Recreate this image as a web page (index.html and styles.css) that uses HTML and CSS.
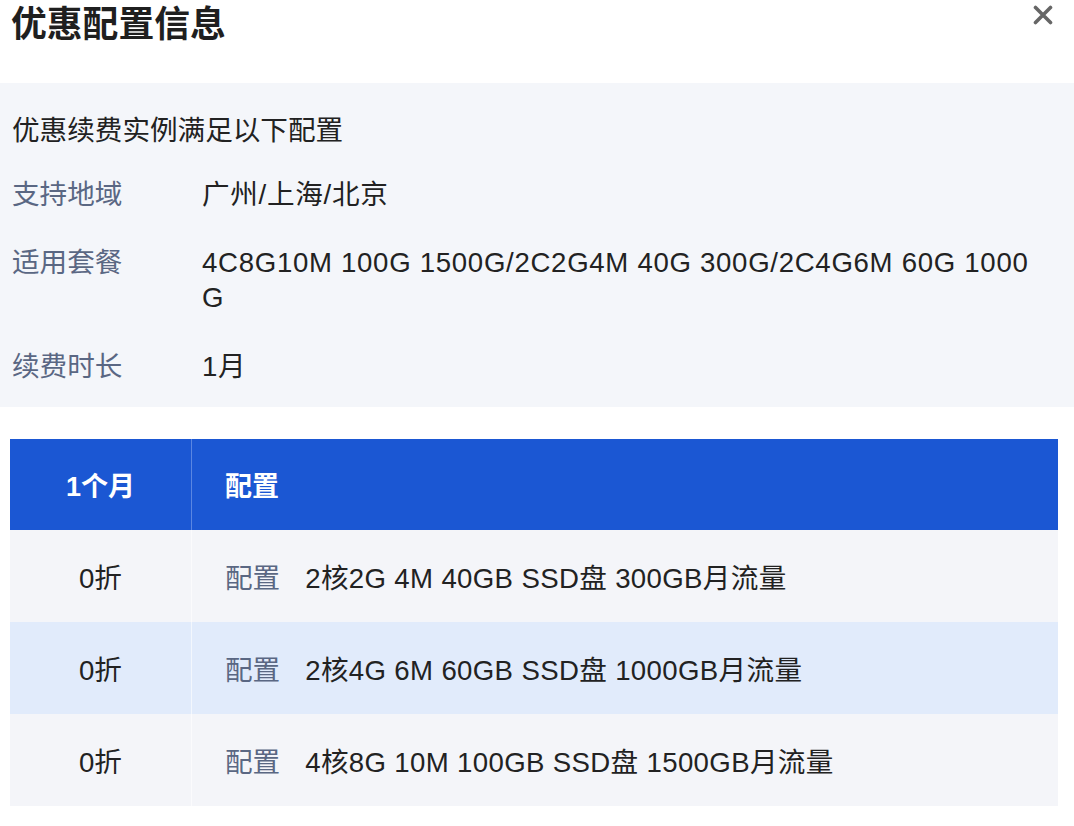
FILE: index.html
```html
<!DOCTYPE html>
<html lang="zh-CN">
<head>
<meta charset="utf-8">
<title>优惠配置信息</title>
<link rel="stylesheet" href="styles.css">
</head>
<body>
<div class="dialog">
  <header class="dialog-head">
    <h1 class="dialog-title">优惠配置信息</h1>
    <button class="close-btn" aria-label="关闭">
      <svg width="20" height="20" viewBox="0 0 20 20"><path d="M2.5 2.5 L17.5 17.5 M17.5 2.5 L2.5 17.5" stroke="#666" stroke-width="3.6" stroke-linecap="round" fill="none"/></svg>
    </button>
  </header>

  <section class="info">
    <div class="info-title">优惠续费实例满足以下配置</div>
    <div class="info-row">
      <div class="info-label">支持地域</div>
      <div class="info-value">广州/上海/北京</div>
    </div>
    <div class="info-row">
      <div class="info-label">适用套餐</div>
      <div class="info-value">4C8G10M 100G 1500G/2C2G4M 40G 300G/2C4G6M 60G 1000G</div>
    </div>
    <div class="info-row">
      <div class="info-label">续费时长</div>
      <div class="info-value">1月</div>
    </div>
  </section>

  <div class="table">
    <div class="tr th">
      <div class="cell c1">1个月</div>
      <div class="cell c2">配置</div>
    </div>
    <div class="tr odd">
      <div class="cell c1">0折</div>
      <div class="cell c2"><span class="cfg-label">配置</span><span class="cfg-value">2核2G 4M 40GB SSD盘 300GB月流量</span></div>
    </div>
    <div class="tr even">
      <div class="cell c1">0折</div>
      <div class="cell c2"><span class="cfg-label">配置</span><span class="cfg-value">2核4G 6M 60GB SSD盘 1000GB月流量</span></div>
    </div>
    <div class="tr odd">
      <div class="cell c1">0折</div>
      <div class="cell c2"><span class="cfg-label">配置</span><span class="cfg-value">4核8G 10M 100GB SSD盘 1500GB月流量</span></div>
    </div>
  </div>
</div>
</body>
</html>
```

FILE: styles.css
```css
html, body {
  margin: 0;
  padding: 0;
  background: #ffffff;
}

body {
  font-family: "Liberation Sans", "Noto Sans CJK SC", sans-serif;
  color: #222222;
  font-size: 27.6px;
}

.dialog {
  width: 1074px;
}

.dialog-head {
  height: 83px;
  display: flex;
  justify-content: space-between;
  align-items: flex-start;
}

.dialog-title {
  margin: 0 0 0 11px;
  font-size: 35.8px;
  line-height: 50px;
  font-weight: 700;
  color: #1f1f1f;
}

.close-btn {
  margin: 5px 21px 0 0;
  padding: 0;
  border: 0;
  background: none;
  width: 20px;
  height: 20px;
  display: flex;
}

.info {
  background: #f4f6fa;
  padding: 30px 30px 23px 12px;
}

.info-title {
  line-height: 35px;
}

.info-row {
  display: flex;
  line-height: 35px;
  margin-top: 33px;
}

.info-title + .info-row {
  margin-top: 29px;
}

.info-row:last-child {
  margin-top: 34px;
}

.info-label {
  width: 190px;
  flex: none;
  color: #5a6783;
}

.info-value {
  flex: 1;
  min-width: 0;
  word-break: break-all;
  letter-spacing: 0.7px;
}

.table {
  margin: 32px 16px 0 10px;
}

.tr {
  display: flex;
  height: 92px;
}

.cell {
  display: flex;
  align-items: center;
}

.c1 {
  width: 181px;
  flex: none;
  justify-content: center;
  border-right: 1px solid rgba(255, 255, 255, 0.6);
}

.c2 {
  flex: 1;
  padding-left: 33px;
}

.th {
  height: 91px;
  background: #1b57d3;
  color: #ffffff;
  font-weight: 700;
  font-size: 27px;
}

.th .c1 {
  border-right-color: #5a86e2;
}

.odd {
  background: #f4f5f9;
}

.even {
  background: #e1ebfb;
}

.cfg-label {
  color: #5a6783;
  margin-right: 25px;
}

.cfg-value {
  letter-spacing: 0.35px;
}
```
